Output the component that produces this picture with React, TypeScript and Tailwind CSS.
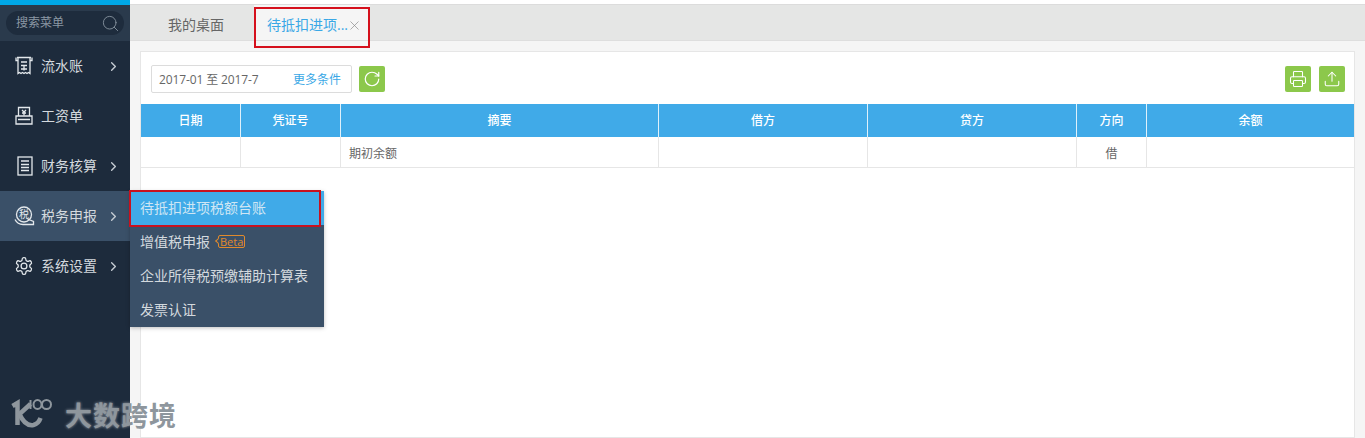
import React from "react";
import { ChevronRight, Search, RotateCw, Printer, Upload, X } from "lucide-react";

const font = { fontFamily: '"Open Sans","Noto Sans CJK SC",sans-serif' };

const Ledger = () => (
  <svg width="18" height="20" viewBox="0 0 18 20" fill="none" stroke="#e3e8ec" strokeWidth="1.3">
    <path d="M2 1.5h14M3 1.5v16l1.5-1 1.5 1 1.5-1 1.5 1 1.5-1 1.5 1 1.5-1 1.5 1v-16" />
    <path d="M1 1.5v3h2M17 1.5v3h-2M6 6h6M6 9.5h6M6 13h6M9 9.5v5" />
  </svg>
);
const Payroll = () => (
  <svg width="18" height="20" viewBox="0 0 18 20" fill="none" stroke="#e3e8ec" strokeWidth="1.3">
    <path d="M3.5 10V1.5h11V10M1 10h16v8H1zM3 13.5h12" />
    <path d="M7 4l2 2 2-2M9 6v3.5M7 7h4" />
  </svg>
);
const Accounting = () => (
  <svg width="16" height="20" viewBox="0 0 16 20" fill="none" stroke="#e3e8ec" strokeWidth="1.3">
    <rect x="1" y="1" width="14" height="18" />
    <path d="M4 5h8M4 8.5h8M4 11.5h8M4 14.5h8" />
  </svg>
);
const Tax = () => (
  <svg width="21" height="20" viewBox="0 0 21 20" fill="none" stroke="#e3e8ec" strokeWidth="1.3">
    <circle cx="10" cy="8.5" r="7.5" />
    <path d="M1 13.5c2 4 5 5 8 5h10.500v-3l-6-2.500" />
    <text x="10" y="12" textAnchor="middle" fontSize="10" fill="#e3e8ec" stroke="none">税</text>
  </svg>
);
const Gear = () => (
  <svg width="20" height="20" viewBox="0 0 24 24" fill="none" stroke="#e3e8ec" strokeWidth="1.5">
    <path d="M12.22 2h-.44a2 2 0 0 0-2 2v.18a2 2 0 0 1-1 1.73l-.43.25a2 2 0 0 1-2 0l-.15-.08a2 2 0 0 0-2.73.73l-.22.38a2 2 0 0 0 .73 2.73l.15.1a2 2 0 0 1 1 1.72v.51a2 2 0 0 1-1 1.74l-.15.09a2 2 0 0 0-.73 2.73l.22.38a2 2 0 0 0 2.73.73l.15-.08a2 2 0 0 1 2 0l.43.25a2 2 0 0 1 1 1.73V20a2 2 0 0 0 2 2h.44a2 2 0 0 0 2-2v-.18a2 2 0 0 1 1-1.73l.43-.25a2 2 0 0 1 2 0l.15.08a2 2 0 0 0 2.73-.73l.22-.39a2 2 0 0 0-.73-2.73l-.15-.08a2 2 0 0 1-1-1.74v-.5a2 2 0 0 1 1-1.74l.15-.09a2 2 0 0 0 .73-2.73l-.22-.38a2 2 0 0 0-2.73-.73l-.15.08a2 2 0 0 1-2 0l-.43-.25a2 2 0 0 1-1-1.73V4a2 2 0 0 0-2-2z" />
    <circle cx="12" cy="12" r="3.500" />
  </svg>
);

const menu = [
  { label: "流水账", icon: <Ledger />, arrow: true, x: "pl-[15px]", w: "w-[26px]" },
  { label: "工资单", icon: <Payroll />, arrow: false, x: "pl-[15px]", w: "w-[26px]" },
  { label: "财务核算", icon: <Accounting />, arrow: true, x: "pl-[17px]", w: "w-[24px]" },
  { label: "税务申报", icon: <Tax />, arrow: true, x: "pl-[14px]", w: "w-[27px]", active: true },
  { label: "系统设置", icon: <Gear />, arrow: true, x: "pl-[14px]", w: "w-[27px]" },
];

const cols = [
  { name: "日期", w: "w-[100px]" },
  { name: "凭证号", w: "w-[100px]" },
  { name: "摘要", w: "w-[318px]" },
  { name: "借方", w: "w-[209px]" },
  { name: "贷方", w: "w-[209px]" },
  { name: "方向", w: "w-[70px]" },
  { name: "余额", w: "flex-1" },
];

export default function App() {
  return (
    <div style={font} className="relative flex h-[438px] w-[1365px] overflow-hidden bg-[#f5f5f5]">
      <aside className="flex w-[130px] shrink-0 flex-col bg-[#1d2b3c]">
        <div className="h-[5px] bg-[#00a8e8]" />
        <div className="flex h-[36px] items-center bg-[#2a3a4c] px-[6px]">
          <div className="flex h-[24px] w-full items-center justify-between rounded-full bg-[#1e2c3d] pl-[10px] pr-[4px] text-[12px] text-[#8b97a3]">
            <span>搜索菜单</span>
            <Search size={19} strokeWidth={1.1} color="#8b97a3" />
          </div>
        </div>
        {menu.map((m) => (
          <div
            key={m.label}
            className={`flex h-[50px] items-center ${m.x} ${m.active ? "bg-[#3a5068]" : ""}`}
          >
            <span className={`flex shrink-0 items-center ${m.w}`}>{m.icon}</span>
            <span className="pb-[2px] text-[14px] text-[#d3d9de]">{m.label}</span>
            {m.arrow && (
              <ChevronRight size={15} strokeWidth={2.2} color="#c5ccd3" className="absolute left-[106px]" />
            )}
          </div>
        ))}
      </aside>

      <main className="flex min-w-0 flex-1 flex-col">
        <div className="h-[5px] border-b border-[#dcdcdc] bg-white" />
        <nav className="flex h-[36px] items-stretch border-b border-[#dedede] bg-[#e5e6e5]">
          <div className="flex w-[124px] items-center justify-center pl-[8px] pt-[3px] text-[14px] text-[#666]">我的桌面</div>
          <div className="flex w-[116px] items-center bg-[#f5f5f5] pl-[13px] pt-[3px] text-[14px] text-[#3aa8e6]">
            <span>待抵扣进项...</span>
            <X size={15} strokeWidth={1.1} color="#888" className="-ml-[1px] mt-[2px]" />
          </div>
        </nav>
        <section className="mx-[10px] mt-[10px] flex-1 border border-[#e6e6e6] bg-white">
          <div className="flex h-[52px] items-center justify-between pl-[10px] pr-[9px] pt-[1px]">
            <div className="flex items-center gap-[7px]">
              <div className="flex h-[28px] w-[201px] items-center justify-between rounded-[2px] border border-[#dcdcdc] pl-[7px] pr-[10px] text-[12px]">
                <span className="pt-[2px] tracking-[-0.12px] text-[#666]">2017-01 至 2017-7</span>
                <span className="pt-[2px] text-[#3aa8e6]">更多条件</span>
              </div>
              <button className="flex h-[26px] w-[26px] items-center justify-center rounded-[2px] bg-[#8cc84b]">
                <RotateCw size={18} strokeWidth={1.6} color="#fff" />
              </button>
            </div>
            <div className="flex items-center gap-[8px]">
              <button className="flex h-[26px] w-[26px] items-center justify-center rounded-[2px] bg-[#8cc84b]">
                <Printer size={18} strokeWidth={1.4} color="#fff" />
              </button>
              <button className="flex h-[26px] w-[26px] items-center justify-center rounded-[2px] bg-[#8cc84b]">
                <Upload size={18} strokeWidth={1.4} color="#fff" />
              </button>
            </div>
          </div>
          <div className="flex h-[33px] bg-[#40aae8]">
            {cols.map((c, i) => (
              <div
                key={c.name}
                className={`flex items-center justify-center text-[12px] font-medium text-white ${c.w} ${i < 6 ? "border-r border-[#dff1fb]" : ""}`}
              >
                {c.name}
              </div>
            ))}
          </div>
          <div className="flex h-[31px] border-b border-[#e6e6e6] text-[12px] text-[#666]">
            {cols.map((c, i) => (
              <div
                key={c.name}
                className={`flex items-center pt-[3px] ${c.w} ${i < 6 ? "border-r border-[#e6e6e6]" : ""} ${i === 2 ? "pl-[8px]" : "justify-center"}`}
              >
                {i === 2 ? "期初余额" : i === 5 ? "借" : ""}
              </div>
            ))}
          </div>
        </section>
      </main>

      {/* 子菜单 */}
      <div className="absolute left-[130px] top-[191px] w-[194px] bg-[#3a5068] text-[14px] text-[#d3d9de] shadow-[0_1px_4px_rgba(0,0,0,0.25)]">
        <div className="flex h-[34px] items-center bg-[#40aae8] pb-[2px] pl-[10px] text-[#cfe6f4]">待抵扣进项税额台账</div>
        <div className="flex h-[34px] items-center pb-[2px] pl-[10px]">
          增值税申报
          <span className="relative ml-[8px] mt-[1px] rounded-[2px] border border-[#e08a2c] px-[1px] text-[11px] leading-[11px] text-[#e08a2c]">
            Beta
            <span className="absolute -left-[3px] top-[3px] h-[4px] w-[4px] rotate-45 border-b border-l border-[#e08a2c] bg-[#3a5068]" />
          </span>
        </div>
        <div className="flex h-[34px] items-center pb-[2px] pl-[10px]">企业所得税预缴辅助计算表</div>
        <div className="flex h-[34px] items-center pb-[2px] pl-[10px]">发票认证</div>
      </div>

      {/* 红色标注框 */}
      <div className="pointer-events-none absolute left-[254px] top-[7px] h-[41px] w-[116px] border-2 border-[#d5101c]" />
      <div className="pointer-events-none absolute left-[129px] top-[190px] h-[37px] w-[192px] border-2 border-[#c8111f]" />

      {/* 水印 */}
      <div className="pointer-events-none absolute left-[10px] top-[397px] flex items-center gap-[8px]">
        <svg width="47" height="32" viewBox="0 0 46 32" fill="none" stroke="#8e969d">
          <path d="M2 9l5-3v22" strokeWidth="4.500" />
          <path d="M20 7L9 17c3 7 8 12 14 11 4-1 6-4 7-7" strokeWidth="4.500" />
          <path d="M20 3v9" strokeWidth="2" />
          <ellipse cx="27" cy="7.500" rx="4" ry="4.500" strokeWidth="2" />
          <ellipse cx="36" cy="7.500" rx="4.500" ry="4.500" strokeWidth="2" />
        </svg>
        <span
          className="mt-[4px] text-[27px] font-bold leading-none tracking-[1px] text-[#8e969d]"
          style={{ textShadow: "0 0 3px rgba(255,255,255,0.55)" }}
        >
          大数跨境
        </span>
      </div>
    </div>
  );
}
